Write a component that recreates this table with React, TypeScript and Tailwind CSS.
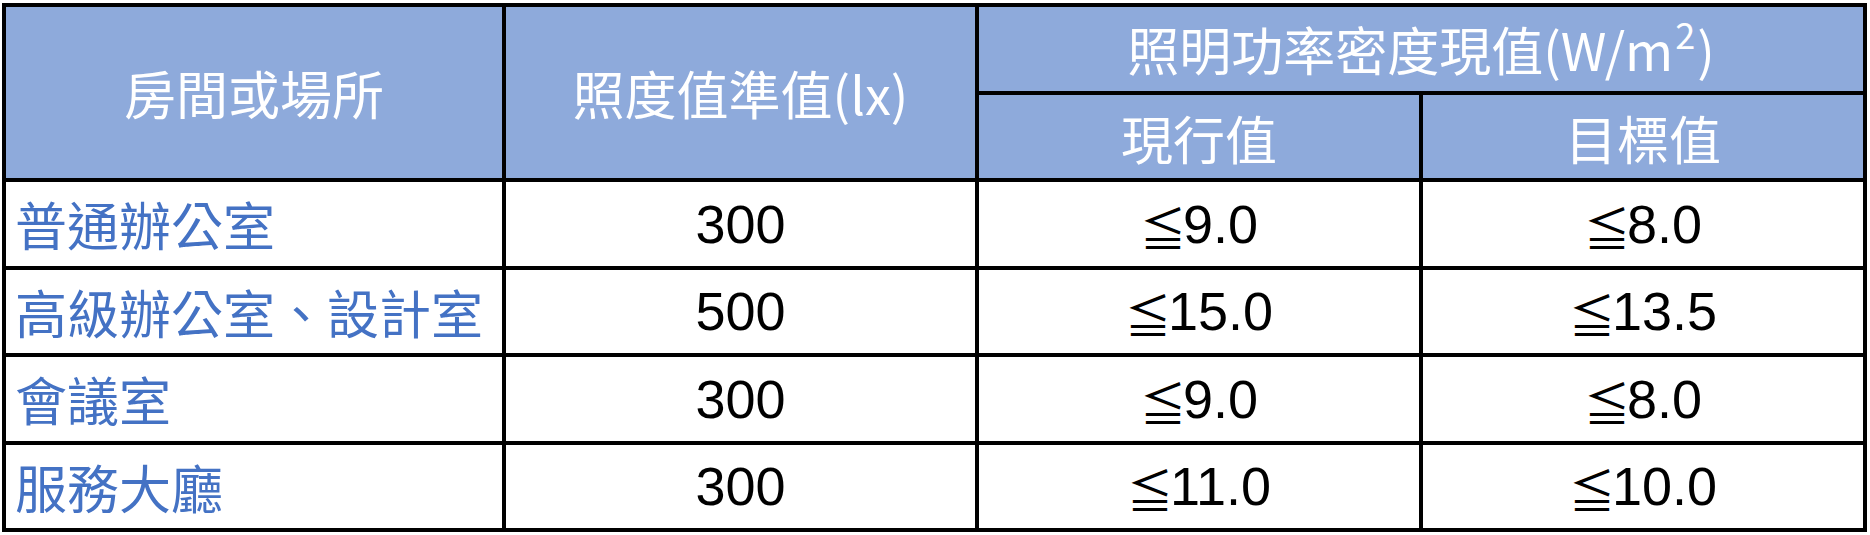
import React from "react";

const cjk = "font-['Noto_Sans_CJK_TC','Noto_Sans_CJK_SC',sans-serif]";

function Le({ value }: { value: string }) {
  return (
    <span className="inline-flex items-baseline">
      <span className={`${cjk} text-[46px] mr-[-3px] relative top-[3px]`}>≦</span>
      <span className="font-['Liberation_Sans',Arial,sans-serif]">{value}</span>
    </span>
  );
}

const rows = [
  { name: "普通辦公室", lux: "300", cur: "9.0", target: "8.0" },
  { name: "高級辦公室、設計室", lux: "500", cur: "15.0", target: "13.5" },
  { name: "會議室", lux: "300", cur: "9.0", target: "8.0" },
  { name: "服務大廳", lux: "300", cur: "11.0", target: "10.0" },
];

export default function App() {
  return (
    <div className="w-[1870px] h-[535px] bg-white pl-[2px] pt-[3px]">
      <div
        className={`inline-grid bg-black p-[4px] gap-[4px] grid-cols-[496px_469px_440px_440px] grid-rows-[84px_83px_84px_83px_84px_83px] ${cjk}`}
      >
        <div className="row-span-2 bg-[#8eaadb] text-white text-[52px] flex items-center justify-center">
          房間或場所
        </div>
        <div className="row-span-2 bg-[#8eaadb] text-white text-[52px] flex items-center justify-center">
          照度值準值(lx)
        </div>
        <div className="col-span-2 bg-[#8eaadb] text-white text-[52px] flex items-center justify-center">
          <span className="whitespace-nowrap">
            照明功率密度現值(W/m
            <span className="text-[36px] relative top-[-22px] mx-[2px]">2</span>)
          </span>
        </div>
        <div className="bg-[#8eaadb] text-white text-[52px] flex items-center justify-center pt-[2px]">
          現行值
        </div>
        <div className="bg-[#8eaadb] text-white text-[52px] flex items-center justify-center pt-[2px]">
          目標值
        </div>
        {rows.map((r) => (
          <React.Fragment key={r.name}>
            <div className="bg-white text-[#4472c4] text-[52px] flex items-center pl-[9px]">
              {r.name}
            </div>
            <div className="bg-white text-black text-[54px] flex items-center justify-center font-['Liberation_Sans',Arial,sans-serif]">
              {r.lux}
            </div>
            <div className="bg-white text-black text-[54px] flex items-center justify-center">
              <Le value={r.cur} />
            </div>
            <div className="bg-white text-black text-[54px] flex items-center justify-center">
              <Le value={r.target} />
            </div>
          </React.Fragment>
        ))}
      </div>
    </div>
  );
}
